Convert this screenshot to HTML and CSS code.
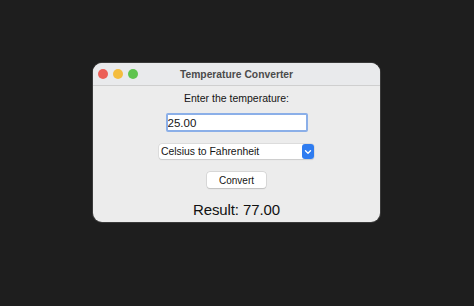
FILE: index.html
```html
<!DOCTYPE html>
<html>
<head>
<meta charset="utf-8">
<link rel="stylesheet" href="styles.css">
</head>
<body>
<div class="window">
  <div class="titlebar">
    <div class="lights">
      <span class="light red"></span>
      <span class="light yellow"></span>
      <span class="light green"></span>
    </div>
    <div class="title">Temperature Converter</div>
    <div></div>
  </div>
  <div class="content">
    <div class="label">Enter the temperature:</div>
    <input class="temp" type="text" value="25.00">
    <div class="select">
      <span class="select-text">Celsius to Fahrenheit</span>
      <span class="select-btn">
        <svg width="8" height="6" viewBox="0 0 8 6"><path d="M1.5 1.8 L4 4.2 L6.5 1.8" fill="none" stroke="#fff" stroke-width="1.4" stroke-linecap="round" stroke-linejoin="round"/></svg>
      </span>
    </div>
    <button class="btn">Convert</button>
    <div class="result">Result: 77.00</div>
  </div>
</div>
</body>
</html>
```
FILE: styles.css
```css
html, body {
  margin: 0;
  padding: 0;
  background: #1e1e1e;
  width: 474px;
  height: 306px;
  overflow: hidden;
  font-family: "Liberation Sans", Arial, sans-serif;
}
body {
  padding-top: 63px;
  padding-left: 93px;
  box-sizing: border-box;
}
.window {
  width: 287px;
  height: 159px;
  background: #ececec;
  border-radius: 9px;
  overflow: hidden;
  box-shadow: 0 0 0 1px #3a3a3a;
}
.titlebar {
  height: 22px;
  background: #e9eaec;
  border-bottom: 1px solid #cfcfcf;
  display: grid;
  grid-template-columns: 1fr auto 1fr;
  align-items: center;
}
.lights {
  display: flex;
  gap: 5px;
  padding-left: 5px;
}
.light {
  width: 10px;
  height: 10px;
  border-radius: 50%;
  display: block;
}
.red { background: #ec5f57; }
.yellow { background: #f4bd3f; }
.green { background: #5fc44f; }
.title {
  font-weight: bold;
  font-size: 10.3px;
  color: #4b4b4b;
}
.content {
  display: flex;
  flex-direction: column;
  align-items: center;
}
.label {
  margin-top: 5px;
  font-size: 10.5px;
  line-height: 14px;
  color: #141414;
}
.temp {
  margin: 8px 0 0 0;
  width: 142px;
  height: 19px;
  box-sizing: border-box;
  border: 2px solid #8bafe8;
  border-radius: 2px;
  background: #fff;
  padding: 0 0 0 0;
  font-family: "Liberation Sans", Arial, sans-serif;
  font-size: 11.5px;
  color: #141414;
  outline: none;
}
.select {
  margin-top: 12px;
  width: 155px;
  height: 15px;
  box-sizing: border-box;
  background: #fff;
  border-radius: 3px;
  box-shadow: 0 0 0 0.5px #cfcfcf, 0 0.5px 1px rgba(0,0,0,0.15);
  display: flex;
  align-items: center;
  justify-content: space-between;
}
.select-text {
  padding-left: 2px;
  font-size: 10.4px;
  color: #141414;
}
.select-btn {
  width: 12px;
  height: 15px;
  background: #2f7cf0;
  border-radius: 3px;
  display: flex;
  align-items: center;
  justify-content: center;
}
.btn {
  margin-top: 13px;
  width: 59px;
  height: 16px;
  padding: 0;
  border: none;
  border-radius: 3px;
  background: #fff;
  box-shadow: 0 0 0 0.5px #c8c8c8, 0 0.5px 1px rgba(0,0,0,0.2);
  font-family: "Liberation Sans", Arial, sans-serif;
  font-size: 10px;
  color: #141414;
}
.result {
  margin-top: 12px;
  font-size: 15px;
  line-height: 19px;
  color: #111;
  letter-spacing: -0.1px;
}
```
